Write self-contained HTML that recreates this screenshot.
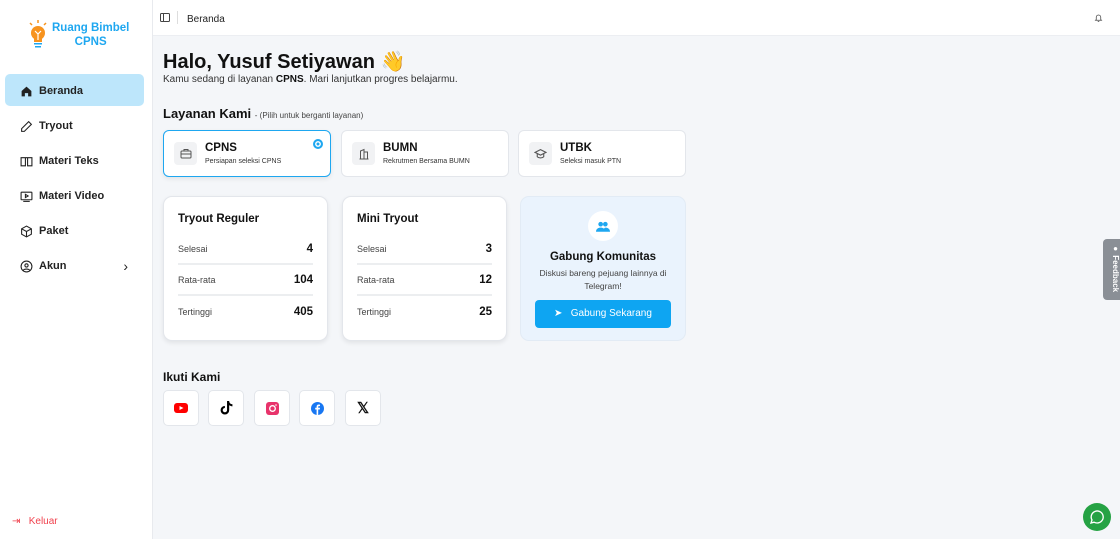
<!DOCTYPE html>
<html><head><meta charset="utf-8"><style>
*{box-sizing:border-box;margin:0;padding:0}
body{width:1120px;height:539px;overflow:hidden;font-family:"Liberation Sans",sans-serif;background:#f4f6f9;color:#111;position:relative}
.side{position:absolute;left:0;top:0;width:153px;height:539px;background:#fff;border-right:1px solid #e8eaee}
.logo{position:absolute;left:28px;top:20px;display:flex;align-items:center}
.logo .t{color:#1ea7f0;font-weight:bold;font-size:11.5px;text-align:center;line-height:14px;margin-left:4px}
.nav{position:absolute;left:5px;width:139px;height:32px;display:flex;align-items:center;padding-left:15px;padding-top:2px;font-size:11px;font-weight:bold;color:#222;border-radius:5px;line-height:14px}
.nav svg{margin-right:6px}
.nav.a{background:#bde6fb}
.top{position:absolute;left:153px;top:0;right:0;height:36px;background:#fff;border-bottom:1px solid #eceef2;font-size:10px;color:#222}
.main{position:absolute;left:163px}
.card{position:absolute;background:#fff;border:1px solid #e3e6eb;border-radius:6px}
.svc{top:130px;height:47px;width:168px;display:flex;align-items:center;padding-left:10px}
.svc .ic{width:23px;height:23px;background:#f1f2f4;border-radius:4px;display:flex;align-items:center;justify-content:center;margin-right:8px}
.svc b{font-size:11.5px;display:block;line-height:14px}
.svc span{font-size:7px;color:#333;display:block;line-height:10px;margin-top:2px}
.st{top:196px;width:165px;height:145px;border-radius:9px;box-shadow:0 2px 5px rgba(0,0,0,.08);padding:15px 14px 0 14px}
.st h3{font-size:11.5px;margin-bottom:8px;line-height:14px}
.row{display:flex;justify-content:space-between;align-items:center;font-size:9px;color:#444;height:31px;border-bottom:2px solid #eceef0}
.row:last-child{border:0}
.row b{font-size:11.5px;color:#111}
.soc{position:absolute;top:390px;width:36px;height:36px;background:#fff;border:1px solid #e3e6eb;border-radius:5px;display:flex;align-items:center;justify-content:center}
</style></head><body>
<div class="side">
 <div class="logo">
  <svg width="20" height="30" viewBox="0 0 20 30"><g stroke="#f7931e" stroke-width="1.5"><line x1="10" y1="0" x2="10" y2="3"/><line x1="2" y1="3" x2="4" y2="5"/><line x1="18" y1="3" x2="16" y2="5"/></g><circle cx="10" cy="13" r="7" fill="#f7931e"/><rect x="6" y="17" width="8" height="5" fill="#f7931e"/><path d="M7 11l3 3 3-3M10 14v6" stroke="#fff" stroke-width="1.2" fill="none"/><rect x="6" y="23" width="8" height="1.5" fill="#1ea7f0"/><rect x="7" y="26" width="6" height="1.5" fill="#1ea7f0"/></svg>
  <div class="t">Ruang Bimbel<br>CPNS</div>
 </div>
 <div class="nav a" style="top:74px"><svg width="13" height="13" viewBox="0 0 24 24"><path d="M3 11L12 3l9 8v10h-6v-6H9v6H3z" fill="#222"/></svg>Beranda</div>
 <div class="nav" style="top:109px"><svg width="13" height="13" viewBox="0 0 24 24" fill="none" stroke="#222" stroke-width="2"><path d="M16 3l5 5L8 21H3v-5z"/></svg>Tryout</div>
 <div class="nav" style="top:144px"><svg width="13" height="13" viewBox="0 0 24 24" fill="none" stroke="#222" stroke-width="2"><path d="M2 5h8v15H2zM14 5h8v15h-8zM10 5h4v15"/></svg>Materi Teks</div>
 <div class="nav" style="top:179px"><svg width="13" height="13" viewBox="0 0 24 24" fill="none" stroke="#222" stroke-width="2"><rect x="2" y="4" width="20" height="14" rx="1"/><path d="M10 8l5 3-5 3z"/><path d="M6 21h12"/></svg>Materi Video</div>
 <div class="nav" style="top:214px"><svg width="13" height="13" viewBox="0 0 24 24" fill="none" stroke="#222" stroke-width="2"><path d="M12 2l9 5v10l-9 5-9-5V7zM3 7l9 5 9-5M12 12v10"/></svg>Paket</div>
 <div class="nav" style="top:249px"><svg width="13" height="13" viewBox="0 0 24 24" fill="none" stroke="#222" stroke-width="2"><circle cx="12" cy="12" r="10"/><circle cx="12" cy="10" r="3"/><path d="M6 19c2-3 10-3 12 0"/></svg>Akun<span style="position:absolute;right:16px;font-size:14px;font-weight:normal">›</span></div>
 <div style="position:absolute;left:12px;top:516px;font-size:10px;color:#f0414d;line-height:12px">⇥&nbsp;&nbsp;&nbsp;Keluar</div>
</div>
<div class="top">
 <svg style="position:absolute;left:7px;top:13px" width="10" height="9" viewBox="0 0 10 9" fill="none" stroke="#444"><rect x=".5" y=".5" width="9" height="8" rx="1"/><line x1="3.5" y1="1" x2="3.5" y2="8"/></svg>
 <div style="position:absolute;left:24px;top:11px;width:1px;height:13px;background:#ddd"></div>
 <div style="position:absolute;left:34px;top:14px;line-height:12px">Beranda</div>
 <svg style="position:absolute;right:17px;top:13px" width="9" height="10" viewBox="0 0 24 24" fill="none" stroke="#444" stroke-width="2"><path d="M6 16V10a6 6 0 0112 0v6l2 2H4zM10 21h4"/></svg>
</div>
<div class="main" style="top:50px;font-size:20px;font-weight:bold;line-height:24px">Halo, Yusuf Setiyawan 👋</div>
<div class="main" style="top:74px;font-size:10px;color:#333;line-height:12px">Kamu sedang di layanan <b style="color:#111">CPNS</b>. Mari lanjutkan progres belajarmu.</div>
<div class="main" style="top:106px;font-size:13px;font-weight:bold;line-height:15px">Layanan Kami <span style="font-size:8px;font-weight:normal;color:#444">- (Pilih untuk berganti layanan)</span></div>
<div class="card svc" style="left:163px;border:1.5px solid #1ea7f0;box-shadow:0 2px 5px rgba(0,0,0,.08)"><div class="ic"><svg width="12" height="11" viewBox="0 0 24 22" fill="none" stroke="#555" stroke-width="2"><rect x="2" y="6" width="20" height="14" rx="2"/><path d="M8 6V3h8v3M2 12h20"/></svg></div><div><b>CPNS</b><span>Persiapan seleksi CPNS</span></div><div style="position:absolute;right:7px;top:8px;width:10px;height:10px;border-radius:50%;background:#1ea7f0;border:2px solid #1ea7f0;box-shadow:inset 0 0 0 1.5px #fff"></div></div>
<div class="card svc" style="left:341px"><div class="ic"><svg width="12" height="12" viewBox="0 0 24 24" fill="none" stroke="#555" stroke-width="2"><path d="M3 22h18M5 22V6l7-3v19M12 8h7v14"/></svg></div><div><b>BUMN</b><span>Rekrutmen Bersama BUMN</span></div></div>
<div class="card svc" style="left:518px"><div class="ic"><svg width="13" height="12" viewBox="0 0 24 22" fill="none" stroke="#555" stroke-width="2"><path d="M2 8l10-5 10 5-10 5zM6 10v6c3 3 9 3 12 0v-6"/></svg></div><div><b>UTBK</b><span>Seleksi masuk PTN</span></div></div>
<div class="card st" style="left:163px"><h3>Tryout Reguler</h3><div class="row">Selesai<b>4</b></div><div class="row">Rata-rata<b>104</b></div><div class="row">Tertinggi<b>405</b></div></div>
<div class="card st" style="left:342px"><h3>Mini Tryout</h3><div class="row">Selesai<b>3</b></div><div class="row">Rata-rata<b>12</b></div><div class="row">Tertinggi<b>25</b></div></div>
<div class="card" style="left:520px;top:196px;width:166px;height:145px;border-radius:9px;background:#eaf3fd;border-color:#e2ebf5;text-align:center">
 <div style="margin:14px auto 0;width:30px;height:30px;border-radius:50%;background:#fff;display:flex;align-items:center;justify-content:center"><svg width="14" height="11" viewBox="0 0 24 18" fill="#1ea7f0"><circle cx="8" cy="5" r="4"/><circle cx="16" cy="5" r="4"/><path d="M0 18c0-5 4-7 8-7s8 2 8 7zM12 18c0-4 3-7 4-7 4 0 8 2 8 7z"/></svg></div>
 <div style="font-size:11.5px;font-weight:bold;margin-top:9px;line-height:14px">Gabung Komunitas</div>
 <div style="font-size:8.5px;color:#444;margin-top:3px;line-height:12.5px">Diskusi bareng pejuang lainnya di<br>Telegram!</div>
 <div style="margin:8px auto 0;width:136px;height:28px;background:#0ea5f2;border-radius:4px;color:#fff;font-size:10px;line-height:28px">➤&nbsp;&nbsp;&nbsp;Gabung Sekarang</div>
</div>
<div class="main" style="top:370px;font-size:12px;font-weight:bold;line-height:14px">Ikuti Kami</div>
<div class="soc" style="left:163px"><svg width="14" height="10" viewBox="0 0 14 10"><rect width="14" height="10" rx="3" fill="#f00"/><path d="M5.5 3l4 2-4 2z" fill="#fff"/></svg></div>
<div class="soc" style="left:208px"><svg width="13" height="14" viewBox="0 0 24 26"><path d="M13 0h4c0 3 2 6 6 6v4c-2 0-4-1-6-2v9a8 8 0 11-8-8v4a4 4 0 104 4z" fill="#000"/></svg></div>
<div class="soc" style="left:254px"><svg width="13" height="13" viewBox="0 0 13 13"><rect width="13" height="13" rx="3" fill="#e8336b"/><circle cx="6.5" cy="6.5" r="2.8" fill="none" stroke="#fff" stroke-width="1.3"/><circle cx="10" cy="3" r=".8" fill="#fff"/></svg></div>
<div class="soc" style="left:299px"><svg width="13" height="13" viewBox="0 0 13 13"><circle cx="6.5" cy="6.5" r="6.5" fill="#1877f2"/><path d="M7.2 13V7.5h1.6l.2-1.7H7.2V4.9c0-.5.2-.8.8-.8h1V2.6c-.3 0-.8-.1-1.3-.1-1.3 0-2.1.8-2.1 2.2v1.1H4.2v1.7h1.4V13z" fill="#fff"/></svg></div>
<div class="soc" style="left:345px;font-weight:bold;font-size:15px">𝕏</div>
<div style="position:absolute;left:1103px;top:239px;width:17px;height:61px;background:#8a8f96;border-radius:4px 0 0 4px;color:#fff;font-size:8px;font-weight:bold;writing-mode:vertical-rl;padding-top:5px;text-align:left">● Feedback</div>
<div style="position:absolute;left:1083px;top:503px;width:28px;height:28px;border-radius:50%;background:#25a244;display:flex;align-items:center;justify-content:center"><svg width="16" height="16" viewBox="0 0 24 24" fill="none" stroke="#fff" stroke-width="2"><path d="M3 21l1.5-4.5A9 9 0 1112 21a9 9 0 01-4.5-1.2z"/></svg></div>
</body></html>
